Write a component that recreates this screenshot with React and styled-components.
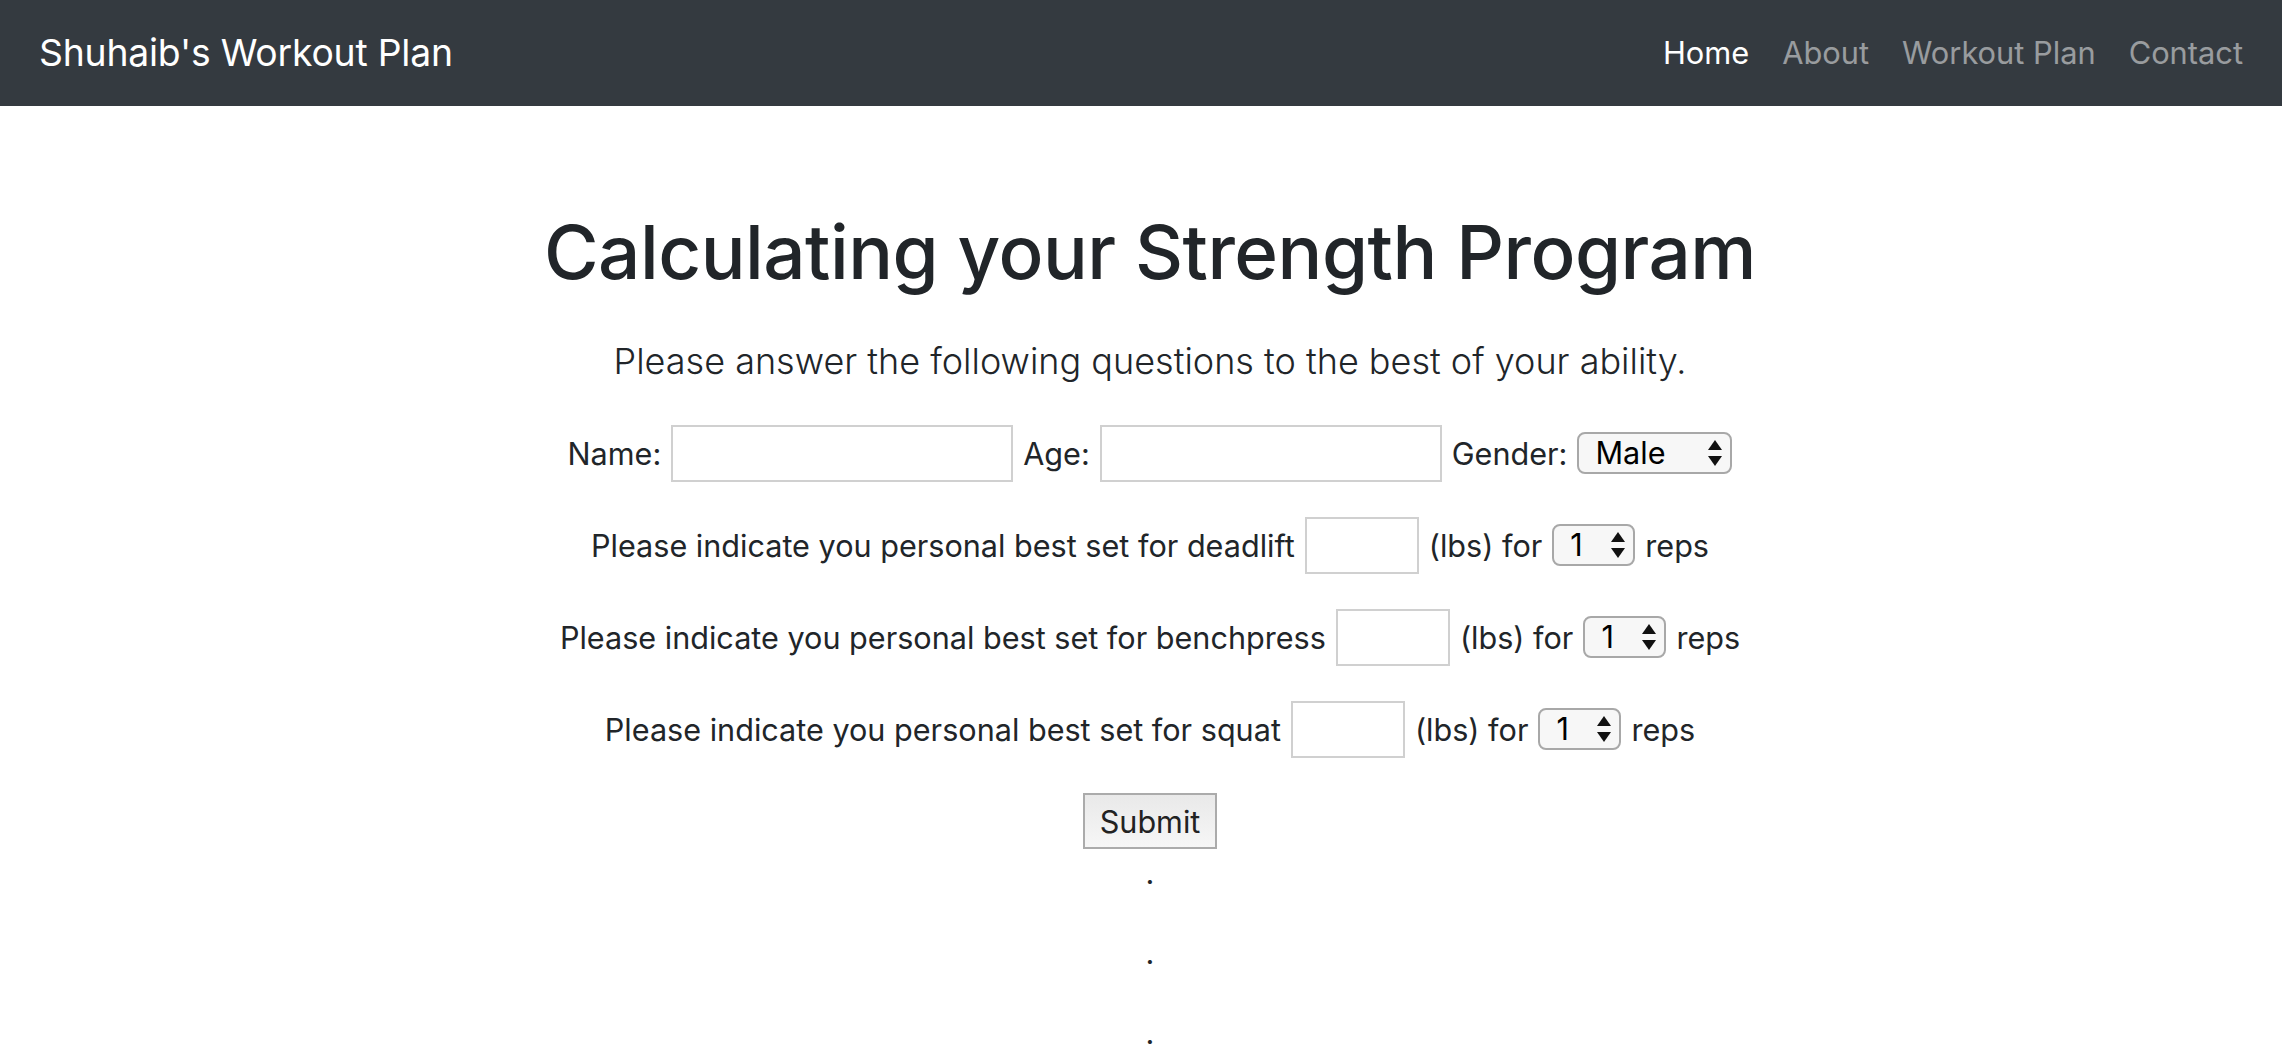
import React from "react";
import styled, { createGlobalStyle } from "styled-components";

const Global = createGlobalStyle`
  html, body { margin: 0; padding: 0; background: #fff; }
  body {
    font-family: "Inter", "Noto Sans", sans-serif;
    color: #212529;
  }
  * { box-sizing: border-box; }
`;

const NavBar = styled.nav`
  height: 106px;
  background: #343a40;
  display: flex;
  align-items: center;
  justify-content: space-between;
  padding: 0 39px 2px;
`;

const Brand = styled.a`
  color: #fff;
  font-size: 37.3px;
  font-weight: 400;
  text-decoration: none;
  letter-spacing: -0.2px;
`;

const NavList = styled.div`
  display: flex;
  align-items: center;
  gap: 33px;
`;

const NavLink = styled.a`
  color: ${(p) => (p.$active ? "#ffffff" : "rgba(255,255,255,0.5)")};
  font-size: 30.8px;
  text-decoration: none;
`;

const Main = styled.main`
  padding: 102px 0 0 18px;
  text-align: center;
`;

const Title = styled.h1`
  margin: 0;
  font-size: 74.5px;
  line-height: 88px;
  font-weight: 500;
  letter-spacing: -0.5px;
`;

const Lead = styled.p`
  margin: 38px 0 0;
  font-size: 36px;
  line-height: 54px;
  font-weight: 300;
`;

const Form = styled.form`
  margin-top: 19px;
  display: flex;
  flex-direction: column;
`;

const Row = styled.div`
  height: 92px;
  display: flex;
  align-items: center;
  justify-content: center;
  gap: 10px;
  font-size: 30.6px;
`;

const Label = styled.span`
  font-size: 30.6px;
`;

const TextInput = styled.input`
  width: ${(p) => p.$w}px;
  height: 57px;
  border: 2px solid #d0d0d0;
  border-radius: 0;
  background: #fff;
  font: inherit;
  padding: 0 8px;
  outline: none;
`;

const SelectWrap = styled.span`
  position: relative;
  display: inline-flex;
`;

const Select = styled.select`
  appearance: none;
  -webkit-appearance: none;
  width: ${(p) => p.$w}px;
  height: 42px;
  border: 2px solid #a8a8a8;
  border-radius: 8px;
  background: #f7f7f7;
  color: #000;
  font-family: "Inter", sans-serif;
  font-size: 30.6px;
  line-height: 38px;
  padding: 0 0 0 16px;
  outline: none;
`;

const Arrows = styled.svg`
  position: absolute;
  right: 9px;
  top: 50%;
  transform: translateY(-50%);
  pointer-events: none;
`;

const SubmitButton = styled.button`
  width: 134px;
  height: 56px;
  border: 2px solid #ababab;
  background: linear-gradient(#e9e9e9, #f6f6f6);
  color: #222;
  font-family: "Inter", sans-serif;
  font-size: 30.6px;
  padding: 0;
`;

const Dots = styled.div`
  margin-top: -18px;
  display: flex;
  flex-direction: column;
`;

const Dot = styled.p`
  margin: 0;
  height: 80px;
  line-height: 48px;
  font-size: 30.6px;
`;

function Dropdown({ width, options }) {
  return (
    <SelectWrap>
      <Select $w={width} defaultValue={options[0]}>
        {options.map((o) => (
          <option key={o}>{o}</option>
        ))}
      </Select>
      <Arrows width="16" height="28" viewBox="0 0 16 28">
        <path d="M8 1 L15 11 L1 11 Z" fill="#111" />
        <path d="M8 27 L15 17 L1 17 Z" fill="#111" />
      </Arrows>
    </SelectWrap>
  );
}

function LiftRow({ lift }) {
  return (
    <Row>
      <Label>Please indicate you personal best set for {lift}</Label>
      <TextInput $w={114} type="text" />
      <Label>(lbs) for</Label>
      <Dropdown width={83} options={["1", "2", "3", "4", "5", "6", "7", "8", "9", "10"]} />
      <Label>reps</Label>
    </Row>
  );
}

export default function App() {
  return (
    <>
      <Global />
      <NavBar>
        <Brand href="#">Shuhaib's Workout Plan</Brand>
        <NavList>
          <NavLink $active href="#">Home</NavLink>
          <NavLink href="#">About</NavLink>
          <NavLink href="#">Workout Plan</NavLink>
          <NavLink href="#">Contact</NavLink>
        </NavList>
      </NavBar>
      <Main>
        <Title>Calculating your Strength Program</Title>
        <Lead>Please answer the following questions to the best of your ability.</Lead>
        <Form onSubmit={(e) => e.preventDefault()}>
          <Row>
            <Label>Name:</Label>
            <TextInput $w={342} type="text" />
            <Label>Age:</Label>
            <TextInput $w={342} type="text" />
            <Label>Gender:</Label>
            <Dropdown width={155} options={["Male", "Female"]} />
          </Row>
          <LiftRow lift="deadlift" />
          <LiftRow lift="benchpress" />
          <LiftRow lift="squat" />
          <Row>
            <SubmitButton type="submit">Submit</SubmitButton>
          </Row>
        </Form>
        <Dots>
          <Dot>.</Dot>
          <Dot>.</Dot>
          <Dot>.</Dot>
        </Dots>
      </Main>
    </>
  );
}
